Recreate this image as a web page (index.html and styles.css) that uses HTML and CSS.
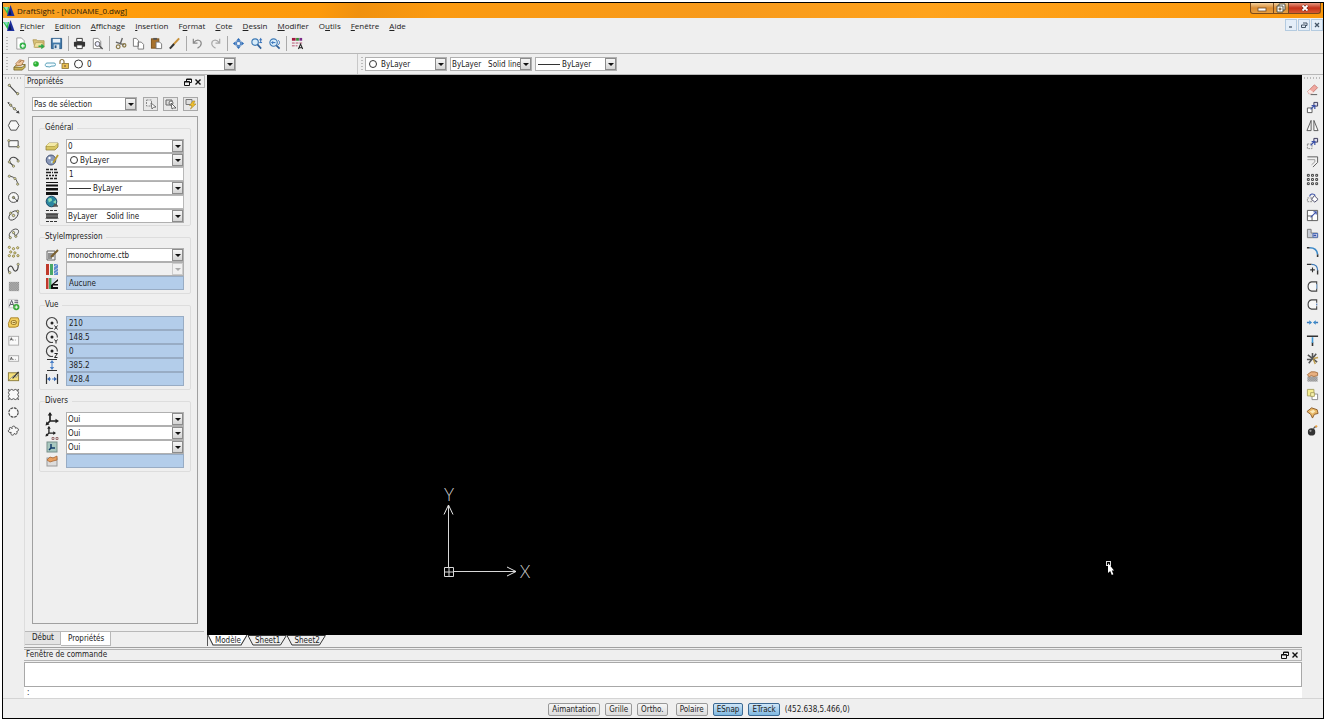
FILE: index.html
```html
<!DOCTYPE html>
<html lang="fr">
<head>
<meta charset="utf-8">
<title>DraftSight - [NONAME_0.dwg]</title>
<link rel="stylesheet" href="styles.css">
</head>
<body>
<svg class="defs" aria-hidden="true">
  <defs>
    <pattern id="hatch" width="2" height="2" patternUnits="userSpaceOnUse"><rect width="2" height="2" fill="#ccc"/><path d="M0 0h1v1H0zM1 1h1v1H1z" fill="#777"/></pattern>
    <symbol id="logo" viewBox="0 0 12 12"><path d="M0 2h6L5 10z" fill="#2fc24a"/><path d="M1 2l4 0-1 4z" fill="#7fe0c0"/><path d="M7.500 0l4 11H4z" fill="#1c2f9c"/><path d="M7 4l1.500 6H5.500z" fill="#0b1550"/></symbol>
    <symbol id="float" viewBox="0 0 8 8"><path d="M2.500 3V1h5v3.500H6M2.500 1.500h5M.5 3.500h5v4h-5zM.5 4h5" fill="none" stroke="#111"/></symbol>
    <symbol id="cross" viewBox="0 0 8 8"><path d="M1.500 1.500l5 5M6.500 1.500l-5 5" stroke="#111" stroke-width="1.400"/></symbol>
    <symbol id="view" viewBox="0 0 14 14"><path d="M8 12.400A5.500 5.500 0 1 1 12.400 7.500" fill="none" stroke="#444" stroke-width="1.200"/><circle cx="7" cy="7" r="1.500" fill="#222"/></symbol>
    <symbol id="axes" viewBox="0 0 14 14"><path d="M5 1v8h7M5 9l-3 3" fill="none" stroke="#222" stroke-width="1.700"/><path d="M5 0l2.300 3.500H2.700zM14 9l-3.500 2.300V6.700zM.5 13.500l1-4 3 3z" fill="#222"/></symbol>
  </defs>
</svg>

<div class="window">
  <header class="titlebar">
    <svg class="i12"><use href="#logo"/></svg>
    <h1>DraftSight - [NONAME_0.dwg]</h1>
    <div class="caption">
      <button class="cap-min" aria-label="Réduire"><svg viewBox="0 0 12 10"><rect x="2" y="5" width="8" height="3" fill="#fff" stroke="#6b4a2a" stroke-width=".8"/></svg></button>
      <button class="cap-max" aria-label="Restaurer"><svg viewBox="0 0 12 10"><path d="M4 1h6v6H4z" fill="#fff" stroke="#554"/><path d="M2 3h6v6H2z" fill="#fff" stroke="#554"/><path d="M4 5h2v2H4z" fill="#c89050" stroke="#554" stroke-width=".6"/></svg></button>
      <button class="cap-close" aria-label="Fermer"><svg viewBox="0 0 12 10"><path d="M3.500 2.500l5 5M8.500 2.500l-5 5" stroke="#5b1a10" stroke-width="3"/><path d="M3.500 2.500l5 5M8.500 2.500l-5 5" stroke="#fff" stroke-width="1.800"/></svg></button>
    </div>
  </header>

  <nav class="menubar">
    <svg class="i12"><use href="#logo"/></svg>
    <button><u>F</u>ichier</button><button><u>E</u>dition</button><button><u>A</u>ffichage</button><button><u>I</u>nsertion</button><button>F<u>o</u>rmat</button><button><u>C</u>ote</button><button><u>D</u>essin</button><button><u>M</u>odifier</button><button>O<u>u</u>tils</button><button><u>F</u>enêtre</button><button><u>A</u>ide</button>
    <div class="mdi">
      <button aria-label="Réduire le dessin"><svg viewBox="0 0 8 8"><path d="M2 6h3" stroke="#456" stroke-width="1.300"/></svg></button>
      <button aria-label="Restaurer le dessin"><svg viewBox="0 0 8 8"><path d="M3 2h4v2.500H6M1.500 4h4v2.500h-4z" fill="none" stroke="#456"/></svg></button>
      <button aria-label="Fermer le dessin"><svg viewBox="0 0 8 8"><path d="M2 2l4 4M6 2L2 6" stroke="#456" stroke-width="1.300"/></svg></button>
    </div>
  </nav>

  <div class="toolbar" role="toolbar" aria-label="Standard">
    <i class="grip"></i>
    <button aria-label="Nouveau"><svg viewBox="0 0 14 14"><path d="M3 1h5l3 3v9H3z" fill="#fff" stroke="#999"/><circle cx="9.500" cy="9.500" r="3.500" fill="#35b14a"/><path d="M9.500 7.500v4M7.500 9.500h4" stroke="#fff" stroke-width="1.200"/></svg></button>
    <button aria-label="Ouvrir"><svg viewBox="0 0 14 14"><path d="M1 3h4l1 1h7v7H3z" fill="#d9c27a" stroke="#a8914a" stroke-width=".8"/><path d="M2 11l2-5h8l-1 5z" fill="#f0e0a0" stroke="#a8914a" stroke-width=".6"/><path d="M7 10h5M10 8l2.500 2L10 12.500" fill="none" stroke="#2fa84a" stroke-width="1.500"/></svg></button>
    <button aria-label="Enregistrer"><svg viewBox="0 0 14 14"><path d="M1.500 1.500h11v11h-11z" fill="#3f78a8" stroke="#2b5a88"/><path d="M3 2h8v4H3z" fill="#e8f1f8"/><path d="M4 8h6v5H4z" fill="#dfe8ee"/><path d="M5 9h2v3H5z" fill="#2b5a88"/></svg></button>
    <i class="sep"></i>
    <button aria-label="Imprimer"><svg viewBox="0 0 14 14"><path d="M4 1.500h6V5H4z" fill="#fff" stroke="#333"/><rect x="1" y="5" width="12" height="5.500" rx="1" fill="#333"/><path d="M4 8.500h6v4H4z" fill="#fff" stroke="#333"/></svg></button>
    <button aria-label="Aperçu"><svg viewBox="0 0 14 14"><path d="M2.500 1.500h5l3 3v8h-8z" fill="#fff" stroke="#888"/><circle cx="7" cy="7.500" r="2.600" fill="#eef" stroke="#555"/><path d="M9 9.500l3.500 3.500" stroke="#555" stroke-width="1.500"/></svg></button>
    <i class="sep"></i>
    <button aria-label="Couper"><svg viewBox="0 0 14 14"><path d="M9 1L6.500 8M2 5.500l9 3" stroke="#666" stroke-width="1.500"/><circle cx="4.500" cy="10.500" r="2" fill="none" stroke="#8a7a4a" stroke-width="1.300"/><circle cx="11" cy="9" r="1.800" fill="none" stroke="#8a7a4a" stroke-width="1.300"/></svg></button>
    <button aria-label="Copier"><svg viewBox="0 0 14 14"><path d="M1.500 1.500h3l2.500 2.500v6H1.500zM6.500 5.500h3.500l2.500 2.500v5h-6z" fill="#fff" stroke="#777"/></svg></button>
    <button aria-label="Coller"><svg viewBox="0 0 14 14"><rect x="1.500" y="2" width="8" height="10" fill="#a8722c" stroke="#7a5018"/><rect x="3.500" y="1" width="4" height="2" fill="#555"/><path d="M6.500 5.500h4l2 2v5h-6z" fill="#fff" stroke="#777"/></svg></button>
    <button aria-label="Copier les propriétés"><svg viewBox="0 0 14 14"><path d="M12 1.500L6 8" stroke="#c89038" stroke-width="2.200"/><path d="M6.500 7.500L2 12.500" stroke="#333" stroke-width="2.200"/></svg></button>
    <i class="sep"></i>
    <button aria-label="Annuler"><svg viewBox="0 0 14 14"><path d="M2.500 2v4.500H7M3 6c3-4 8-3 8 1 0 3-2 4-4 5" fill="none" stroke="#8a8a8a" stroke-width="1.300"/></svg></button>
    <button aria-label="Rétablir"><svg viewBox="0 0 14 14"><path d="M11.500 2v4.500H7M11 6C8 2 3 3 3 7c0 3 2 4 4 5" fill="none" stroke="#a8a8a8" stroke-width="1.300"/></svg></button>
    <i class="sep"></i>
    <button aria-label="Panoramique"><svg viewBox="0 0 14 14"><path d="M7 1l2.500 3h-5zM7 13l2.500-3h-5zM1 7l3-2.500v5zM13 7l-3-2.500v5z" fill="#2d6cb8"/><path d="M5 5h4v4H5z" fill="#fff" stroke="#2d6cb8"/></svg></button>
    <button aria-label="Zoom"><svg viewBox="0 0 14 14"><circle cx="5.500" cy="5.500" r="3.500" fill="#d8ecfa" stroke="#3e7ab5" stroke-width="1.200"/><path d="M8 8l4 4.500" stroke="#2d5f98" stroke-width="1.800"/><path d="M11.500 1v5M10 3h3M10 6h3" stroke="#2d6cb8"/></svg></button>
    <button aria-label="Zoom précédent"><svg viewBox="0 0 14 14"><circle cx="6" cy="6" r="4" fill="#d8ecfa" stroke="#3e7ab5" stroke-width="1.200"/><path d="M9 9l3.500 3.500" stroke="#2d5f98" stroke-width="1.800"/><path d="M11 3.500a3 3 0 0 1 0 5M4 6h4M5.500 4.500L4 6l1.500 1.500" fill="none" stroke="#2d6cb8"/></svg></button>
    <i class="sep"></i>
    <button aria-label="Propriétés"><svg viewBox="0 0 14 14"><path d="M1 1h4v3H1z" fill="#a01840"/><path d="M5.500 1h3v3h-3z" fill="#3a8a3a"/><path d="M9 1h3v3H9z" fill="#7a2a88"/><path d="M1 6.500h11M1 9.500h6" stroke="#b04a68" stroke-dasharray="3 1"/><path d="M8 13l2.300-5.500L12.600 13M8.800 11.500h3" fill="none" stroke="#222" stroke-width="1.100"/></svg></button>
  </div>

  <div class="toolbar props">
    <div class="band layers">
      <i class="grip"></i>
      <button aria-label="Calques"><svg viewBox="0 0 14 14"><path d="M1 10l3-3h9l-3 3zM1 10v3h9l3-3V7" fill="#c9b458" stroke="#6a5a20" stroke-width=".8"/><path d="M3 6l4-4 5 1-3 5-5 0z" fill="#f0c8a0" stroke="#a06a3a" stroke-width=".8"/><path d="M6 5l3-2" stroke="#a06a3a"/></svg></button>
      <div class="combo">
        <svg class="i12" viewBox="0 0 12 12"><circle cx="6" cy="6" r="2.800" fill="#2bb034"/><circle cx="5.300" cy="5.200" r="1" fill="#8fe090"/></svg>
        <svg class="i14" viewBox="0 0 14 12"><path d="M3 8.500a2 2 0 0 1 1-3.500h7a1.500 1.500 0 0 1 0 3l-3 .2-1 .8z" fill="#f2fbff" stroke="#5aa0b8"/></svg>
        <svg class="i12" viewBox="0 0 12 12"><path d="M2 6V3.500a2 2 0 0 1 4 0V6" fill="none" stroke="#8a7440" stroke-width="1.200"/><rect x="4" y="5.500" width="6.500" height="5" fill="#e8bf50" stroke="#8a7030" stroke-width=".8"/><path d="M7 7v2" stroke="#644"/></svg>
        <svg class="i14" viewBox="0 0 14 12"><circle cx="7.500" cy="6" r="4" fill="#fff" stroke="#333"/></svg>
        <select aria-label="Calque actif"><option>0</option></select><span class="arrow"></span>
      </div>
    </div>
    <div class="band styles">
      <i class="grip"></i>
      <div class="combo"><svg class="i14" viewBox="0 0 14 12"><circle cx="7" cy="6" r="3.500" fill="#fff" stroke="#333"/></svg><select aria-label="Couleur de ligne"><option>ByLayer</option></select><span class="arrow"></span></div>
      <div class="combo"><select aria-label="Style de ligne"><option>ByLayer &nbsp; Solid line</option></select><span class="arrow"></span></div>
      <div class="combo"><i class="rule"></i><select aria-label="Épaisseur de ligne"><option>ByLayer</option></select><span class="arrow"></span></div>
    </div>
  </div>

  <main class="main">
    <div class="tools" role="toolbar" aria-label="Dessin">
      <i class="hgrip"></i>
      <button aria-label="Ligne"><svg viewBox="0 0 14 14"><path d="M3 3l8 8.500" stroke="#444" stroke-width="1.200"/><circle cx="2.500" cy="2.500" r="1.200" fill="#efe8a0" stroke="#665"/><circle cx="11.500" cy="11.500" r="1.200" fill="#efe8a0" stroke="#665"/></svg></button>
      <button aria-label="Ligne infinie"><svg viewBox="0 0 14 14"><path d="M1 2l12 11" stroke="#555"/><circle cx="4" cy="4.500" r="1.200" fill="#efe8a0" stroke="#665"/><circle cx="8" cy="8.300" r="1.200" fill="#efe8a0" stroke="#665"/><path d="M13.500 13.500l-4-.8 3-2.500zM.5 1l2.500.5L1.500 3.500z" fill="#444"/></svg></button>
      <button aria-label="Polygone"><svg viewBox="0 0 14 14"><path d="M4 2h6l3 5-3 5H4L1.500 7z" fill="#f8f8f8" stroke="#444"/></svg></button>
      <button aria-label="Rectangle"><svg viewBox="0 0 14 14"><path d="M2 4h10v6.500H2z" fill="#f8f8f8" stroke="#444"/><circle cx="2" cy="4" r="1.200" fill="#efe8a0" stroke="#665" stroke-width=".8"/><circle cx="12" cy="10.500" r="1.200" fill="#efe8a0" stroke="#665" stroke-width=".8"/></svg></button>
      <button aria-label="Polyligne"><svg viewBox="0 0 14 14"><path d="M7 12L2.500 7.500C3 1 9.500 1 12 6" fill="none" stroke="#444" stroke-width="1.200"/><g fill="#efe8a0" stroke="#665" stroke-width=".8"><circle cx="2.500" cy="7.500" r="1.200"/><circle cx="7" cy="12" r="1.200"/><circle cx="12" cy="6.500" r="1.200"/></g></svg></button>
      <button aria-label="Arc"><svg viewBox="0 0 14 14"><path d="M2 3.500c5 0 9 3 9.500 9" fill="none" stroke="#444"/><g fill="#efe8a0" stroke="#665" stroke-width=".8"><circle cx="2.500" cy="3.500" r="1.200"/><circle cx="8.500" cy="6" r="1.200"/><circle cx="11.500" cy="12" r="1.200"/></g></svg></button>
      <button aria-label="Cercle"><svg viewBox="0 0 14 14"><circle cx="7" cy="7" r="5.300" fill="#f8f8f8" stroke="#444"/><circle cx="7" cy="7" r="1.200" fill="#efe8a0" stroke="#554"/><path d="M7 7l4 3.500" stroke="#555"/><circle cx="11" cy="10.500" r="1" fill="#444"/></svg></button>
      <button aria-label="Ellipse"><svg viewBox="0 0 14 14"><ellipse cx="7" cy="7" rx="6" ry="3.700" transform="rotate(-45 7 7)" fill="none" stroke="#444"/><g fill="#efe8a0" stroke="#554" stroke-width=".8"><circle cx="7" cy="7" r="1.300"/><circle cx="11.500" cy="2.500" r="1.200"/><circle cx="4" cy="4.500" r="1.200"/></g></svg></button>
      <button aria-label="Arc elliptique"><svg viewBox="0 0 14 14"><path d="M3.500 11.500C-.5 8 7 .5 11 2.500c3 1.500 1 5-2 7" fill="none" stroke="#444"/><path d="M7 6l2 3.500" stroke="#555"/><g fill="#efe8a0" stroke="#554" stroke-width=".8"><circle cx="7" cy="6" r="1.200"/><circle cx="3.500" cy="11.500" r="1.200"/><circle cx="9.500" cy="10" r="1.200"/></g></svg></button>
      <button aria-label="Point"><svg viewBox="0 0 14 14"><g fill="#efe8a0" stroke="#776a30" stroke-width=".8"><circle cx="2.500" cy="2.500" r="1.200"/><circle cx="7" cy="4" r="1.200"/><circle cx="11.500" cy="3" r="1.200"/><circle cx="4" cy="7.500" r="1.200"/><circle cx="8.500" cy="8.500" r="1.200"/><circle cx="2.500" cy="11.500" r="1.200"/><circle cx="7" cy="12" r="1.200"/><circle cx="11.800" cy="11.500" r="1.200"/></g></svg></button>
      <button aria-label="Spline"><svg viewBox="0 0 14 14"><path d="M2.500 11.500C-1 5 5 2 6.500 7s6 3 5.500-4" fill="none" stroke="#444" stroke-width="1.200"/><g fill="#efe8a0" stroke="#665" stroke-width=".8"><circle cx="3" cy="11.500" r="1.200"/><circle cx="12" cy="2.500" r="1.200"/></g></svg></button>
      <button aria-label="Hachures"><svg viewBox="0 0 14 14"><rect x="2" y="2" width="11" height="10" fill="url(#hatch)"/></svg></button>
      <button aria-label="Note"><svg viewBox="0 0 14 14"><rect x="2" y="1.500" width="9" height="9" fill="#f6f6f6" stroke="#ccc"/><path d="M2.500 9L5 2.500 7.500 9M3.500 7h3M8 3h4M8 5h4" fill="none" stroke="#556"/><circle cx="10" cy="9.800" r="3.400" fill="#3aa83a"/><path d="M10 8v3.600M8.200 9.800h3.600" stroke="#fff"/></svg></button>
      <button aria-label="Région"><svg viewBox="0 0 14 14"><path d="M4 2h8l1 3-1 6-3 1H2L1.500 8z" fill="#f3d060" stroke="#a87f20"/><rect x="4.500" y="5" width="5.500" height="4" rx="1.500" fill="#fbe89a" stroke="#8c6a20"/><path d="M6 7h3" stroke="#8c6a20"/></svg></button>
      <button aria-label="Bloc de note"><svg viewBox="0 0 14 14"><rect x="2" y="2.500" width="10.500" height="9.500" fill="#fafafa" stroke="#aaa"/><path d="M3.500 7l1.200-3L6 7M4 6h1.500" fill="none" stroke="#444" stroke-width=".8"/><path d="M6.500 6.500h4" stroke="#999" stroke-dasharray="1 1"/></svg></button>
      <button aria-label="Note simple"><svg viewBox="0 0 14 14"><rect x="2" y="4" width="10.500" height="6" fill="#fafafa" stroke="#aaa"/><path d="M3.500 8.500l1.200-3L6 8.500M4 7.500h1.500" fill="none" stroke="#444" stroke-width=".8"/><path d="M6.500 8h4" stroke="#999" stroke-dasharray="1 1"/></svg></button>
      <button aria-label="Masque"><svg viewBox="0 0 14 14"><rect x="1.500" y="3" width="11" height="8.500" fill="#f5e07a" stroke="#8a7a3a"/><path d="M2 11l5-5 3 2 2.500-4" fill="#fff8c8" stroke="#998"/><path d="M12.500 2L6 9" stroke="#333" stroke-width="1.500"/></svg></button>
      <button aria-label="Nuage rectangulaire"><svg viewBox="0 0 14 14"><path d="M1.500 1.500q1.700 2 3.500 0 2 2 4 0 2 2 3.500 0-2 1.700 0 3.500-2 2 0 4-2 1.700 0 3.500-1.500-2-3.500 0-2-2-4 0-1.800-2-3.500 0 2-1.700 0-3.500 2-2 0-4 2-1.800 0-3.500z" fill="#f8f8f8" stroke="#444"/></svg></button>
      <button aria-label="Nuage elliptique"><svg viewBox="0 0 14 14"><circle cx="7" cy="7" r="5" fill="#f8f8f8" stroke="#444" stroke-width="1.200" stroke-dasharray="3 .9"/></svg></button>
      <button aria-label="Nuage"><svg viewBox="0 0 14 14"><path d="M5.500 5C4 2 9.500 1 9 4.500 12 3 14 7.500 10.500 8 12 11 8.500 12 8 10c-1 3.500-5 2-3.500-1C1 10 .5 6 3 6 1.500 3.500 4 3 5.500 5z" fill="#f8f8f8" stroke="#444"/></svg></button>
    </div>

    <div class="center">
      <div class="upper">
        <aside class="dock">
          <header class="dock-title"><h2>Propriétés</h2><button aria-label="Détacher"><svg><use href="#float"/></svg></button><button aria-label="Fermer le panneau"><svg><use href="#cross"/></svg></button></header>
          <div class="picker">
            <div class="combo"><select aria-label="Sélection"><option>Pas de sélection</option></select><span class="arrow"></span></div>
            <button aria-label="Sélection rapide"><svg viewBox="0 0 12 12"><path d="M1.500 2h5v6h-5z" fill="#eee" stroke="#888" stroke-dasharray="2 1"/><path d="M6 5l5 4-2.500.3L7 11z" fill="#fff" stroke="#555" stroke-width=".8"/></svg></button>
            <button aria-label="Sélectionner"><svg viewBox="0 0 12 12"><path d="M1 2h6v5H1z" fill="#ddd" stroke="#666"/><circle cx="6" cy="5" r="2" fill="#fff" stroke="#666"/><path d="M6 5l5 5-2.500 0L7 11z" fill="#fff" stroke="#444" stroke-width=".8"/></svg></button>
            <button aria-label="Sélection intelligente"><svg viewBox="0 0 12 12"><path d="M1 1.500h6v5H1z" fill="#ddd" stroke="#777"/><path d="M8 3L4.500 7.500H7L5.500 11 11 6H8.500L10 3z" fill="#f2c028" stroke="#a5852a" stroke-width=".6"/></svg></button>
          </div>
          <div class="sheet">
            <fieldset>
              <legend>Général</legend>
              <div class="rows r6">
                <svg viewBox="0 0 14 14"><path d="M1 7l3-3h9l-3 3zM1 7v4h9l3-3V4" fill="#d8c662" stroke="#8a7a30" stroke-width=".7"/><path d="M1 7l3-3h9l-3 3z" fill="#f3e9a4"/></svg>
                <div class="combo"><select aria-label="Calque"><option>0</option></select><span class="arrow"></span></div>
                <svg viewBox="0 0 14 14"><ellipse cx="6" cy="7" rx="4.800" ry="5" fill="#8a98b8" stroke="#4a5878"/><circle cx="4.500" cy="5" r="1.200" fill="#fff"/><circle cx="7" cy="9" r="1.200" fill="#b8e0f0"/><path d="M13 2L8 10" stroke="#b89a30" stroke-width="1.800"/></svg>
                <div class="combo"><svg class="i12" viewBox="0 0 12 12"><circle cx="7" cy="6" r="3.500" fill="#fff" stroke="#333"/></svg><select aria-label="Couleur"><option>ByLayer</option></select><span class="arrow"></span></div>
                <svg viewBox="0 0 14 14"><path d="M1 2.500h12M1 11.500h12" stroke="#222" stroke-width="1.400" stroke-dasharray="3 1"/><path d="M1 5.500h12" stroke="#222" stroke-width="1.400" stroke-dasharray="5 1 1 1"/><path d="M1 8.500h12" stroke="#222" stroke-width="1.400" stroke-dasharray="2 1"/></svg>
                <input aria-label="Échelle de ligne" value="1">
                <svg viewBox="0 0 14 14"><path d="M1 1h12v1H1zM1 3.500h12v2H1zM1 7h12v2.500H1zM1 11h12v3H1z" fill="#111"/></svg>
                <div class="combo"><i class="rule"></i><select aria-label="Épaisseur"><option>ByLayer</option></select><span class="arrow"></span></div>
                <svg viewBox="0 0 14 14"><circle cx="6.500" cy="6.500" r="5.300" fill="#2a86a0" stroke="#1c4a68"/><path d="M3 4c2-2 4-1 4 1s-3 1-3 3zM8 7l3-2 0 4z" fill="#8ad8b0"/><path d="M8 11h5M9 9.500h3" stroke="#555" stroke-width="1.500"/></svg>
                <input aria-label="Hyperlien" value="">
                <svg viewBox="0 0 14 14"><path d="M1 1.500h12M1 12.500h12" stroke="#333" stroke-width="1.200" stroke-dasharray="3 1"/><path d="M1 4l2 6 2-6 2 6 2-6 2 6 2-6M1 10l2-6 2 6 2-6 2 6 2-6 2 6" fill="none" stroke="#333" stroke-width=".9"/></svg>
                <div class="combo"><select aria-label="Style de ligne de l'entité"><option>ByLayer &nbsp;&nbsp; Solid line</option></select><span class="arrow"></span></div>
              </div>
            </fieldset>
            <fieldset>
              <legend>StyleImpression</legend>
              <div class="rows r3">
                <svg viewBox="0 0 14 14"><path d="M2 3h8v9H2z" fill="#eee" stroke="#666"/><path d="M3 6h6M3 8h6M3 10h4" stroke="#333"/><path d="M13 2L6 9" stroke="#7a6030" stroke-width="2"/></svg>
                <div class="combo"><select aria-label="Table de styles"><option>monochrome.ctb</option></select><span class="arrow"></span></div>
                <svg viewBox="0 0 14 14"><path d="M1 2h3v11H1z" fill="#c0392b"/><path d="M5 2h3v11H5z" fill="#48a868"/><path d="M9 2h4v11H9z" fill="#5a8ad0"/><path d="M9 5l4-3M9 9l4-3M9 12l4-3" stroke="#bcd"/></svg>
                <div class="combo off"><select aria-label="Style d'impression" disabled><option></option></select><span class="arrow"></span></div>
                <svg viewBox="0 0 14 14"><path d="M1 2h2.500v11H1z" fill="#c0392b"/><path d="M4 2h2.500v11H4z" fill="#48a868"/><path d="M7 2h5L7 8z" fill="#cde"/><path d="M6 13V9l7-6v2L9 8h4v1.500H8V11h5v2z" fill="#111"/></svg>
                <input class="ro" aria-label="Table associée" value="Aucune" readonly>
              </div>
            </fieldset>
            <fieldset>
              <legend>Vue</legend>
              <div class="rows r5">
                <svg viewBox="0 0 14 14"><use href="#view"/><path d="M9.500 9.500l3 4M12.500 9.500l-3 4" stroke="#222"/></svg>
                <input class="ro" aria-label="Centre X" value="210" readonly>
                <svg viewBox="0 0 14 14"><use href="#view"/><path d="M9.500 9.500l1.500 2 1.500-2M11 11.500v2" fill="none" stroke="#222"/></svg>
                <input class="ro" aria-label="Centre Y" value="148.5" readonly>
                <svg viewBox="0 0 14 14"><use href="#view"/><path d="M9.500 9.500h3l-3 4h3" fill="none" stroke="#222"/></svg>
                <input class="ro" aria-label="Centre Z" value="0" readonly>
                <svg viewBox="0 0 14 14"><path d="M2 1.500h10M2 12.500h10" stroke="#333" stroke-width="1.200"/><path d="M7 3v8" stroke="#4a80c8"/><path d="M7 2l2.200 3H4.800zM7 12l2.200-3H4.800z" fill="#4a80c8"/></svg>
                <input class="ro" aria-label="Hauteur" value="385.2" readonly>
                <svg viewBox="0 0 14 14"><path d="M1.500 2v10M12.500 2v10" stroke="#333" stroke-width="1.200"/><path d="M3 7h8" stroke="#4a80c8" stroke-dasharray="3 1"/><path d="M2 7l3-2.200v4.400zM12 7L9 4.800v4.400z" fill="#3a68b0"/></svg>
                <input class="ro" aria-label="Largeur" value="428.4" readonly>
              </div>
            </fieldset>
            <fieldset>
              <legend>Divers</legend>
              <div class="rows r4">
                <svg><use href="#axes"/></svg>
                <div class="combo"><select aria-label="Icône SCU"><option>Oui</option></select><span class="arrow"></span></div>
                <svg viewBox="0 0 14 14"><use href="#axes" width="11" height="11"/><path d="M7 11.500h2v2H7zM11 11.500h2v2h-2z" fill="none" stroke="#855" stroke-width=".8"/></svg>
                <div class="combo"><select aria-label="Icône à l'origine"><option>Oui</option></select><span class="arrow"></span></div>
                <svg viewBox="0 0 14 14"><rect x="2" y="2" width="10" height="10" fill="#a8c8c0" stroke="#78908c"/><path d="M6 4v4h4M6 8l-2 2" fill="none" stroke="#123a68" stroke-width="1.500"/></svg>
                <div class="combo"><select aria-label="SCU par vue"><option>Oui</option></select><span class="arrow"></span></div>
                <svg viewBox="0 0 14 14"><rect x="2" y="4" width="10" height="8" fill="#ddd" stroke="#999"/><path d="M2 6l3-3 3 1 4-2v4l-4 1-3 1z" fill="#e8a060" stroke="#a86838" stroke-width=".8"/></svg>
                <input class="ro" aria-label="Style visuel" value="" readonly>
              </div>
            </fieldset>
          </div>
          <div class="dock-tabs"><button>Début</button><button class="on">Propriétés</button></div>
        </aside>

        <section class="drawing">
          <div class="canvas">
            <svg class="ucs" viewBox="0 0 96 94">
              <path d="M8.500 80V19M13 84.500h63M4.500 80.500h9v9h-9zM4.500 85h9M9 80.500v9" fill="none" stroke="#d8d8d8"/>
              <path d="M4 27.500l4.500-9.500 4.500 9.500M67 80l9 4.500-9 4.500" fill="none" stroke="#e8e8e8"/>
              <text x="9" y="14" text-anchor="middle">Y</text><text x="85" y="91" text-anchor="middle">X</text>
            </svg>
            <svg class="pointer" viewBox="0 0 10 16"><rect x="1.500" y="1.500" width="4" height="4" fill="none" stroke="#ddd"/><path d="M3 3v10l2.200-2 1.600 4 1.600-.8-1.600-3.700H9z" fill="#fff"/></svg>
          </div>
          <div class="sheets">
            <button class="on"><svg viewBox="0 0 40 11" preserveAspectRatio="none"><path d="M0 0l5 10h28l6-10" fill="#fff" stroke="#333"/></svg><span>Modèle</span></button>
            <button><svg viewBox="0 0 40 11" preserveAspectRatio="none"><path d="M0 .5l5 9.500h28l6-9.500z" fill="#efefef" stroke="#333"/></svg><span>Sheet1</span></button>
            <button><svg viewBox="0 0 40 11" preserveAspectRatio="none"><path d="M0 .5l5 9.500h28l6-9.500z" fill="#efefef" stroke="#333"/></svg><span>Sheet2</span></button>
          </div>
        </section>
      </div>

      <section class="command">
        <header class="dock-title"><h2>Fenêtre de commande</h2><button aria-label="Détacher la fenêtre"><svg><use href="#float"/></svg></button><button aria-label="Fermer la fenêtre"><svg><use href="#cross"/></svg></button></header>
        <textarea aria-label="Historique" readonly></textarea>
        <input aria-label="Commande" value=":">
      </section>
    </div>

    <div class="tools" role="toolbar" aria-label="Modifier">
      <i class="hgrip"></i>
      <button aria-label="Supprimer"><svg viewBox="0 0 14 14"><path d="M2 9l7-7 3.500 3L6 11.500H3z" fill="#f0a8a0" stroke="#c07068" stroke-width=".8"/><path d="M2 9l2-2 4 3-2 1.500H3z" fill="#fbe8e4"/><path d="M5 12.500h7" stroke="#555"/></svg></button>
      <button aria-label="Copier l'entité"><svg viewBox="0 0 14 14"><path d="M1.500 7.500h5v5h-5z" fill="#fff" stroke="#555"/><path d="M8.500 1.500h4v4h-4z" fill="#dde" stroke="#335"/><path d="M5 9l4-4M6 5H9.500v3.500" fill="none" stroke="#3a50a8" stroke-width="1.300"/></svg></button>
      <button aria-label="Miroir"><svg viewBox="0 0 14 14"><path d="M5.500 1.500v11H1zM8.500 1.500v11H13z" fill="#fafafa" stroke="#555"/></svg></button>
      <button aria-label="Déplacer"><svg viewBox="0 0 14 14"><path d="M1.500 7.500h5v5h-5z" fill="none" stroke="#888" stroke-dasharray="2 1"/><path d="M8.500 1.500h4v4h-4z" fill="#dde" stroke="#335"/><path d="M5 9l4-4M6 5H9.500v3.500" fill="none" stroke="#3a50a8" stroke-width="1.300"/></svg></button>
      <button aria-label="Décaler"><svg viewBox="0 0 14 14"><path d="M1.500 2h11v6L7.500 13" fill="none" stroke="#555"/><path d="M1.500 5h8v2.500L6 10.500" fill="none" stroke="#999"/></svg></button>
      <button aria-label="Réseau"><svg viewBox="0 0 14 14"><path d="M1.500 1.500h2v2h-2zM6 1.500h2v2H6zM10.500 1.500h2v2h-2zM1.500 6h2v2h-2zM6 6h2v2H6zM10.500 6h2v2h-2zM1.500 10.500h2v2h-2zM6 10.500h2v2H6zM10.500 10.500h2v2h-2z" fill="#fff" stroke="#333"/></svg></button>
      <button aria-label="Rotation"><svg viewBox="0 0 14 14"><path d="M1.500 7.500h5v4h-5z" fill="none" stroke="#888" stroke-dasharray="2 1"/><path d="M9 5l4 4-3.500 3L6 9z" fill="#fff" stroke="#446"/><path d="M4 6c0-3 4-4 6-1" fill="none" stroke="#3a50a8" stroke-width="1.200"/></svg></button>
      <button aria-label="Échelle"><svg viewBox="0 0 14 14"><path d="M1.500 1.500h11v11h-11z" fill="#fff" stroke="#555"/><path d="M1.500 7.500h5v5" fill="none" stroke="#555"/><path d="M5 9l6-6M8 3h3v3" fill="none" stroke="#3a50a8" stroke-width="1.200"/></svg></button>
      <button aria-label="Étirer"><svg viewBox="0 0 14 14"><path d="M1.500 2.500h4v4h7v5h-11z" fill="#c8ccd4" stroke="#777"/><path d="M7.500 7h5v4h-5z" fill="#dde" stroke="#446ab8"/><path d="M8 9h3" stroke="#3a50a8" stroke-width="1.500"/></svg></button>
      <button aria-label="Raccord"><svg viewBox="0 0 14 14"><path d="M1 3h3M12.500 10v3" stroke="#333" stroke-width="1.700"/><path d="M4 3c5 0 8 3 8.500 7" fill="none" stroke="#3a88c8" stroke-width="1.700"/></svg></button>
      <button aria-label="Ajuster"><svg viewBox="0 0 14 14"><path d="M1 2.500h5M12.500 9v4.500" stroke="#333" stroke-width="1.500"/><path d="M6 2.500c4 0 6.500 2 6.500 6.500" fill="none" stroke="#3a78b8" stroke-width="1.300"/><path d="M7 6v5M4.500 8.500h5" stroke="#333" stroke-width="1.200"/></svg></button>
      <button aria-label="Joindre"><svg viewBox="0 0 14 14"><path d="M11.500 2H6C1 3 1 11 6 12h5.500z" fill="#f8f8f8" stroke="#444" stroke-width="1.200"/><path d="M11.500 4.500v5" stroke="#8ac" stroke-width="1.500"/></svg></button>
      <button aria-label="Fractionner"><svg viewBox="0 0 14 14"><path d="M11.500 5V2H6C1 3 1 11 6 12h5.500V9" fill="#f8f8f8" stroke="#444" stroke-width="1.200"/><path d="M11.500 6v2" stroke="#68b" stroke-width="1.500"/></svg></button>
      <button aria-label="Souder"><svg viewBox="0 0 14 14"><path d="M1 7h3M10 7h3" stroke="#3a78b8" stroke-width="1.500"/><path d="M6.500 7l-3-2.500v5zM7.500 7l3-2.500v5z" fill="#3a88c8"/></svg></button>
      <button aria-label="Prolonger"><svg viewBox="0 0 14 14"><path d="M1 2.500h12M7 9v4" stroke="#333" stroke-width="1.700"/><path d="M7 3.500v6" stroke="#3a98d8" stroke-width="1.700"/></svg></button>
      <button aria-label="Décomposer"><svg viewBox="0 0 14 14"><path d="M2 3l10 8M3 12l8-10M7 1v5M1 8h5" stroke="#555" stroke-width="1.700"/><path d="M8 7l5-1M8 8l2 5" stroke="#c0a050" stroke-width="1.600"/></svg></button>
      <button aria-label="Modifier hachures"><svg viewBox="0 0 14 14"><rect x="1.500" y="7" width="11" height="5.500" fill="url(#hatch)"/><path d="M1.500 5l4-3h4l3 1v3l-4 1-3-1-2 1.500z" fill="#e8b080" stroke="#a87040"/></svg></button>
      <button aria-label="Ordre"><svg viewBox="0 0 14 14"><path d="M1.500 1.500h7v7h-7z" fill="#f6ee90" stroke="#a8a060"/><path d="M6.500 6.500h6v6h-6z" fill="#fff" stroke="#888"/><path d="M5 5h4v4H5z" fill="#f8f4b0" stroke="#a8a060"/></svg></button>
      <button aria-label="Modifier entité"><svg viewBox="0 0 14 14"><path d="M1 6l5-4 6 2 1 4-4 1-2 4-2-4z" fill="#e8b868" stroke="#8a5a28"/><path d="M4 6l4-2 2 2-3 2z" fill="#fbe8b8"/></svg></button>
      <button aria-label="Exploser"><svg viewBox="0 0 14 14"><circle cx="6" cy="8.500" r="4" fill="#333"/><circle cx="4.800" cy="7.300" r="1.200" fill="#999"/><path d="M8 5c1-2 2-2.500 4-2" fill="none" stroke="#555" stroke-width="1.200"/><circle cx="11" cy="2.500" r="1.200" fill="#f0a038"/></svg></button>
    </div>
  </main>

  <footer class="status">
    <button>Aimantation</button><button>Grille</button><button>Ortho.</button><button class="gap">Polaire</button><button class="on">ESnap</button><button class="on">ETrack</button>
    <output>(452.638,5.466,0)</output>
  </footer>
</div>
</body>
</html>
```
FILE: styles.css
```css
* { box-sizing: border-box; }

body {
  margin: 0;
  padding: 2px 2px 1px;
  height: 100vh;
  background: #fff;
  color: #222;
  font: 8px/12px "DejaVu Sans Condensed", "Noto Sans", sans-serif;
}

button, select, input, textarea {
  margin: 0;
  padding: 0;
  border: 0;
  border-radius: 0;
  background: none;
  color: inherit;
  font: inherit;
}
h1, h2 { margin: 0; font-size: inherit; font-weight: normal; }
svg { display: block; flex: none; }
.defs { position: absolute; width: 0; height: 0; }
.i12 { width: 12px; height: 12px; }
.i14 { width: 14px; height: 12px; }

.window {
  display: flex;
  flex-direction: column;
  height: 100%;
  border: 1px solid #000;
  background: #efefef;
}

/* Title bar and menus */
.titlebar, .menubar {
  display: flex;
  align-items: center;
  flex: none;
  font-family: "Open Sans", "Noto Sans", sans-serif;
}
.titlebar {
  height: 15px;
  gap: 2px;
  background: linear-gradient(100deg, #f5a029 0%, #ff9c0c 9%, #fd9a0c 24%, #f0910f 27%, #fb9a10 33%, #f79a1c 55%, #ffa31c 70%, #fb980c 100%);
  color: #2c1c08;
}
.caption { display: flex; align-self: flex-start; margin-left: auto; padding-right: 2px; }
.caption button {
  display: grid;
  place-items: center;
  height: 11px;
  border: 1px solid #7a4a1c;
  border-top: 0;
  border-left-width: 0;
  background: linear-gradient(#f4d09c, #d98c34 50%, #e9a040);
}
.caption svg { width: 12px; height: 10px; }
.caption .cap-min { width: 24px; border-left-width: 1px; border-bottom-left-radius: 3px; }
.caption .cap-max { width: 15px; }
.caption .cap-close { width: 32px; border-bottom-right-radius: 3px; background: linear-gradient(#e89a80, #c43018 50%, #d85a30); }

.menubar { height: 16px; gap: 10px; }
.menubar > svg { margin-right: -5px; }
.menubar u { text-underline-offset: 1px; }
.mdi { display: flex; gap: 1px; align-self: flex-start; margin-left: auto; padding-top: 1px; }
.mdi button { display: grid; place-items: center; width: 12px; height: 12px; border: 1px solid #b4cbe0; background: #e4eef8; }
.mdi svg { width: 8px; height: 8px; }

/* Toolbars */
.toolbar { display: flex; align-items: center; flex: none; height: 20px; border-bottom: 1px solid #b8b8b8; }
.toolbar button { display: grid; place-items: center; width: 18px; height: 18px; }
.toolbar button svg { width: 13px; height: 13px; }
.grip { flex: none; width: 2px; height: 14px; margin: 0 3px; background: repeating-linear-gradient(#bbb 0 1px, transparent 1px 3px); }
.sep { flex: none; width: 1px; height: 15px; margin: 0 1px 0 3px; background: #aaa; }
.props { height: 21px; }
.band { display: flex; align-items: center; height: 100%; }
.layers { width: 355px; border-right: 1px solid #c8c8c8; }
.layers .grip { margin-right: 2px; }
.layers .combo { gap: 1px; width: 208px; padding-left: 1px; }
.styles .combo { width: 82px; margin-right: 3px; }
.styles .grip { margin-right: 2px; }

.combo {
  display: flex;
  align-items: center;
  min-width: 0;
  height: 14px;
  border: 1px solid #b0b0b0;
  background: #fff;
}
.combo select { flex: 1; min-width: 0; height: 12px; padding: 1px 0 0 1px; line-height: 11px; appearance: none; outline: 0; }
.arrow {
  display: grid;
  place-items: center;
  flex: none;
  width: 11px;
  height: 12px;
  border: 1px solid #8c8c8c;
  background: linear-gradient(#f6f6f6, #d4d4d4);
  pointer-events: none;
}
.arrow::after { content: ""; border: 3px solid transparent; border-top-color: #111; border-bottom: 0; }
.rule { flex: none; width: 22px; height: 1px; margin: 0 1px 0 2px; background: #333; }
.off { background: #f0f0f0; }
.off .arrow { border-color: #ccc; background: #f0f0f0; }
.off .arrow::after { border-top-color: #aaa; }

/* Work area */
.main { display: flex; flex: 1; min-height: 0; }
.tools {
  display: grid;
  grid-template-rows: 6px;
  grid-auto-rows: 1fr;
  flex: none;
  align-self: flex-start;
  width: 21px;
  height: 364px;
}
.tools button { display: grid; place-items: center; min-height: 0; }
.tools svg { width: 13px; height: 13px; }
.hgrip { height: 2px; margin: 2px 2px 0; background: repeating-linear-gradient(90deg, #bbb 0 1px, transparent 1px 3px); }
.center { display: flex; flex-direction: column; flex: 1; min-width: 0; }
.upper { display: flex; flex: 1; min-height: 0; }

.dock { display: flex; flex-direction: column; flex: none; width: 183px; border-left: 1px solid #ddd; }
.dock-title {
  display: flex;
  align-items: center;
  gap: 2px;
  height: 13px;
  margin-right: 2px;
  padding: 0 2px;
  border: 1px solid #b4b4b4;
  border-left: 0;
}
.dock-title h2 { flex: 1; }
.dock-title svg { width: 8px; height: 8px; }
.picker { display: flex; align-items: center; gap: 5px; padding: 9px 9px 5px 7px; }
.picker .combo { flex: 1; margin-right: 1px; }
.picker button { display: grid; place-items: center; width: 15px; height: 14px; border: 1px solid #a8a8a8; background: #e8e8e8; }
.picker svg { width: 12px; height: 12px; }

.sheet {
  display: flex;
  flex-direction: column;
  flex: 1;
  gap: 5px;
  margin: 0 9px 7px 7px;
  padding: 5px 6px;
  border: 1px solid #a0a0a0;
}
fieldset { min-width: 0; margin: 0; padding: 5px 6px 4px 5px; border: 1px solid #ddd; border-radius: 2px; }
legend { height: 12px; padding: 0 4px 0 0; }
.rows { display: grid; grid-template-columns: 14px 1fr; grid-auto-rows: 1fr; column-gap: 7px; align-items: stretch; }
.r6 { height: 82px; }
.r5 { height: 69px; }
.r4 { height: 55px; }
.r3 { height: 41px; }
.rows > svg { width: 14px; height: 14px; }
.rows .combo, .rows input { width: 100%; height: 100%; min-height: 0; }
.rows .arrow { height: 100%; }
.rows input { padding-left: 2px; border: 1px solid #b8b8b8; background: #fff; }
.rows .ro { border-color: #98acc4; background: #b3cdea; }

.dock-tabs { display: flex; flex: none; height: 15px; margin-right: 3px; border-top: 1px solid #b8b8b8; }
.dock-tabs button { height: 13px; padding: 0 6px 0 7px; border: 1px solid #b8b8b8; border-width: 0 1px 1px 0; background: #e4e4e4; }
.dock-tabs .on { height: 14px; background: #fff; }

.drawing { display: flex; flex-direction: column; flex: 1; min-width: 0; }
.canvas { position: relative; flex: 1; background: #000; }
.ucs { position: absolute; left: 233px; bottom: 54px; width: 96px; height: 94px; overflow: visible; }
.ucs text { font: 300 17px Lato, sans-serif; fill: #ccc; }
.pointer { position: absolute; right: 187px; bottom: 59px; width: 10px; height: 16px; }
.sheets { display: flex; flex: none; height: 11px; border-left: 1px solid #555; }
.sheets button { position: relative; height: 11px; padding: 0 7px; line-height: 11px; }
.sheets svg { position: absolute; inset: 0; width: 100%; height: 100%; }
.sheets span { position: relative; }

.command { display: flex; flex-direction: column; flex: none; padding-top: 3px; }
.command::before { content: ""; height: 1px; margin-top: -2px; margin-bottom: 1px; background: #a0a0a0; }
.command .dock-title { height: 12px; margin: 0 0 1px; }
.command textarea { height: 25px; border: 1px solid #a8a8a8; background: #fff; resize: none; }
.command input { height: 11px; padding-left: 3px; background: #fff; }

/* Status bar */
.status {
  display: flex;
  align-items: center;
  justify-content: center;
  gap: 5px;
  flex: none;
  height: 20px;
  padding: 2px 0 0 72px;
  border-top: 1px solid #d4d4d4;
}
.status button { height: 13px; padding: 0 3px; border: 1px solid #999; border-radius: 2px; background: linear-gradient(#f6f6f6, #dcdcdc); line-height: 11px; }
.status .gap { margin-left: 3px; }
.status .on { border-color: #3c6a94; background: linear-gradient(#cfe6f8, #7fb8e0); }
```
